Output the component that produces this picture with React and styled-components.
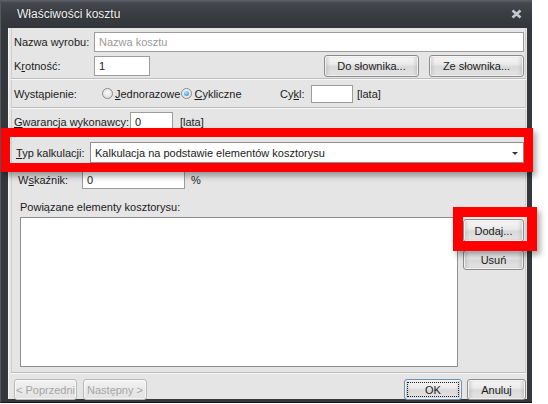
import React from 'react';
import styled, { createGlobalStyle, css } from 'styled-components';

const colors = {
  frame: '#34373b',
  frameDark: '#1f2124',
  panel: '#e5e5e5',
  line: '#bdbdbd',
  text: '#1b1b1b',
  muted: '#9a9a9a',
  field: '#9c9c9c',
  red: '#ff0000',
};

const GlobalStyle = createGlobalStyle`
  html, body {
    margin: 0;
    padding: 0;
    background: #ffffff;
  }
  body {
    font-family: 'Liberation Sans', Arial, sans-serif;
    font-size: 11px;
    color: ${colors.text};
  }
`;

const Window = styled.div`
  position: relative;
  width: 532px;
  height: 403px;
  box-sizing: border-box;
  display: flex;
  flex-direction: column;
  background: ${colors.frame};
  border-left: 1px solid #55585c;
  border-bottom: 1px solid #15171a;
`;

const TitleBar = styled.div`
  height: 28px;
  flex: none;
  display: flex;
  align-items: center;
  justify-content: space-between;
  padding: 0 10px 0 16px;
  background: linear-gradient(to bottom, #60646a 0, #44474c 3px, #3a3d42 14px, #323539 100%);
`;

const Title = styled.span`
  font-size: 12px;
  color: #f2f2f2;
  text-shadow: 0 0 2px rgba(0, 0, 0, 0.6);
`;

const Body = styled.div`
  flex: 1;
  margin: 0 5px 3px 7px;
  display: flex;
  flex-direction: column;
  background: ${colors.panel};
  border-left: 1px solid #f4f4f4;
  padding: 0 1px 0 2px;
  min-height: 0;
`;

const Section = styled.div`
  display: flex;
  flex-direction: column;
  padding: ${(p) => p.$pad || '0'};
  border-left: 1px solid #cfcfcf;
  border-right: 1px solid #cfcfcf;
  border-bottom: 1px solid ${colors.line};
  box-shadow: 0 1px 0 #f8f8f8;
  margin-bottom: 1px;
`;

const Row = styled.div`
  display: flex;
  align-items: center;
  height: ${(p) => p.$h || 19}px;
  margin-top: ${(p) => p.$mt || 0}px;
  padding-left: ${(p) => p.$indent || 0}px;
  gap: ${(p) => p.$gap || 0}px;
`;

const Label = styled.span`
  flex: none;
  width: ${(p) => (p.$w ? `${p.$w}px` : 'auto')};
  white-space: nowrap;
`;

const U = styled.span`
  text-decoration: underline;
`;

const field = css`
  box-sizing: border-box;
  height: ${(p) => p.$h || 19}px;
  border: 1px solid ${colors.field};
  background: #ffffff;
  font-family: 'Liberation Sans', Arial, sans-serif;
  font-size: 11px;
  color: ${colors.text};
  padding: 0 4px;
  display: flex;
  align-items: center;
`;

const Input = styled.div`
  ${field}
  width: ${(p) => (p.$w ? `${p.$w}px` : 'auto')};
  flex: ${(p) => (p.$w ? 'none' : '1')};
  color: ${(p) => (p.$placeholder ? colors.muted : colors.text)};
`;

const Select = styled.div`
  ${field}
  flex: 1;
  justify-content: space-between;
  padding-right: 5px;
  border-color: #8e8e8e;

  &::after {
    content: '';
    border-left: 3px solid transparent;
    border-right: 3px solid transparent;
    border-top: 3px solid #333;
    margin-top: 1px;
  }
`;

const Button = styled.div`
  flex: none;
  box-sizing: border-box;
  width: ${(p) => p.$w}px;
  height: ${(p) => p.$h || 21}px;
  display: flex;
  align-items: center;
  justify-content: center;
  border: 1px solid ${(p) => (p.$focused ? '#6f8fb5' : '#8c8c8c')};
  border-radius: 3px;
  background: linear-gradient(to bottom, #f7f7f7 0%, #ebebeb 40%, #d9d9d9 55%, #e6e6e6 100%);
  box-shadow: inset 0 0 0 1px rgba(255, 255, 255, 0.7), inset 3px 0 3px rgba(160, 160, 160, 0.35),
    inset -3px 0 3px rgba(160, 160, 160, 0.35);
  color: ${(p) => (p.$disabled ? '#a5a5a5' : colors.text)};
  position: relative;

  ${(p) =>
    p.$disabled &&
    css`
      border-color: #b9b9b9;
      background: linear-gradient(to bottom, #f2f2f2, #e2e2e2);
      box-shadow: inset 0 0 0 1px rgba(255, 255, 255, 0.6);
    `}

  ${(p) =>
    p.$focused &&
    css`
      &::before {
        content: '';
        position: absolute;
        inset: 2px;
        border: 1px dotted #222;
      }
    `}
`;

const RadioGroup = styled.div`
  display: flex;
  align-items: center;
  width: 178px;
  flex: none;
`;

const Radio = styled.span`
  width: 11px;
  height: 11px;
  flex: none;
  box-sizing: border-box;
  border-radius: 50%;
  border: 1px solid #8a8a8a;
  background: radial-gradient(circle at 50% 40%, #fafafa 0%, #d8d8d8 100%);
  display: flex;
  align-items: center;
  justify-content: center;
  margin-right: 2px;

  &::after {
    content: '';
    width: 5px;
    height: 5px;
    border-radius: 50%;
    background: ${(p) =>
      p.$checked ? 'radial-gradient(circle at 40% 35%, #bfe4ff 0%, #3d9be9 70%)' : 'transparent'};
  }
`;

const ListArea = styled.div`
  display: flex;
  margin-top: 4px;
  gap: 5px;
  padding-left: 6px;
`;

const List = styled.div`
  width: 440px;
  height: 150px;
  box-sizing: border-box;
  border: 1px solid #8f8f8f;
  background: #ffffff;
`;

const SideButtons = styled.div`
  display: flex;
  flex-direction: column;
  gap: 8px;
  padding-top: 2px;
`;

const Footer = styled.div`
  display: flex;
  align-items: flex-start;
  padding: 5px 0 0 3px;
  gap: 6px;
`;

const Spacer = styled.div`
  flex: 1;
`;

const Highlight = styled.div`
  position: absolute;
  box-sizing: border-box;
  border: ${(p) => p.$b}px solid ${colors.red};
  box-shadow: 3px 4px 6px rgba(0, 0, 0, 0.35);
  pointer-events: none;
`;

function CloseIcon() {
  return (
    <svg width="11" height="10" viewBox="0 0 11 10">
      <path d="M1.5 1.5 L9.5 8.5 M9.5 1.5 L1.5 8.5" stroke="#c4cad1" strokeWidth="2.6" />
    </svg>
  );
}

export default function App() {
  return (
    <>
      <GlobalStyle />
      <Window>
        <TitleBar>
          <Title>Właściwości kosztu</Title>
          <CloseIcon />
        </TitleBar>

        <Body>
          <Section $pad="4px 1px 1px 2px">
            <Row $h={20}>
              <Label $w={80}>Nazwa wyrobu:</Label>
              <Input $h={20} $placeholder>Nazwa kosztu</Input>
            </Row>
            <Row $h={22} $mt={3}>
              <Label $w={80}>
                K<U>r</U>otność:
              </Label>
              <Input $w={56} $h={20}>1</Input>
              <Spacer />
              <Button $w={95} $h={22}>Do słownika...</Button>
              <Button $w={95} $h={22} style={{ marginLeft: 10 }}>Ze słownika...</Button>
            </Row>
          </Section>

          <Section $pad="4px 1px 4px 2px">
            <Row $h={19}>
              <Label $w={88}>Wystąpienie:</Label>
              <RadioGroup>
                <Radio />
                <span>
                  <U>J</U>ednorazowe
                </span>
                <Radio $checked style={{ marginLeft: 1 }} />
                <span>
                  <U>C</U>ykliczne
                </span>
              </RadioGroup>
              <Label $w={31}>
                Cy<U>k</U>l:
              </Label>
              <Input $w={42} $h={18} />
              <Label style={{ marginLeft: 4 }}>[lata]</Label>
            </Row>
          </Section>

          <Section $pad="3px 1px 5px 2px" style={{ flex: 1 }}>
            <Row $h={19}>
              <Label>
                <U>G</U>warancja wykonawcy:
              </Label>
              <Input $w={43} style={{ marginLeft: 1 }}>0</Input>
              <Label style={{ marginLeft: 7 }}>[lata]</Label>
            </Row>
            <Row $h={21} $mt={11} $indent={2}>
              <Label $w={74}>
                <U>T</U>yp kalkulacji:
              </Label>
              <Select $h={21}>Kalkulacja na podstawie elementów kosztorysu</Select>
            </Row>
            <Row $h={19} $mt={7} $indent={4} $gap={6}>
              <Label $w={58}>
                W<U>s</U>kaźnik:
              </Label>
              <Input $w={103}>0</Input>
              <Label>%</Label>
            </Row>
            <Row $h={12} $mt={12} $indent={6}>
              <Label>Powiązane elementy kosztorysu:</Label>
            </Row>
            <ListArea>
              <List />
              <SideButtons>
                <Button $w={61} $h={23}>Dodaj...</Button>
                <Button $w={61} $h={20}>Usuń</Button>
              </SideButtons>
            </ListArea>
          </Section>

          <Footer>
            <Button $w={63} $disabled>&lt; Poprzedni</Button>
            <Button $w={64} $disabled>Następny &gt;</Button>
            <Spacer />
            <Button $w={58} $focused>OK</Button>
            <Button $w={59} style={{ marginLeft: -1 }}>Anuluj</Button>
          </Footer>
        </Body>

        <Highlight $b={9} style={{ left: 0, top: 128, width: 532, height: 44 }} />
        <Highlight $b={10} style={{ left: 452, top: 207, width: 84, height: 44 }} />
      </Window>
    </>
  );
}
